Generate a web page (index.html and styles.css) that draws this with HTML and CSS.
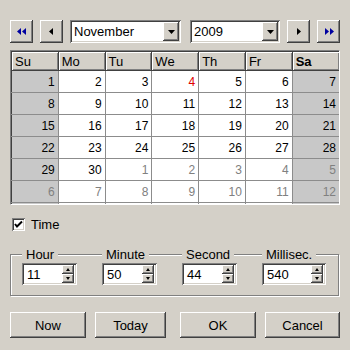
FILE: index.html
```html
<!DOCTYPE html>
<html lang="en">
<head>
    <meta charset="UTF-8">
    <title>Date Chooser</title>
    <link rel="stylesheet" href="styles.css">
</head>
<body>
    <div class="dialog">
        <div class="nav">
            <button class="nav-btn"><svg width="10" height="7" viewBox="0 0 10 7"><polygon points="0,3.5 4,0 4,7" fill="#0000a0"/><polygon points="5,3.5 9,0 9,7" fill="#0000a0"/></svg></button>
            <button class="nav-btn"><svg width="5" height="7" viewBox="0 0 5 7"><polygon points="0,3.5 4,0 4,7" fill="#000"/></svg></button>
            <div class="combo combo-month">
                <span class="combo-text">November</span>
                <span class="combo-arrow"><svg width="7" height="4" viewBox="0 0 7 4"><polygon points="0,0 7,0 3.5,4" fill="#000"/></svg></span>
            </div>
            <div class="combo combo-year">
                <span class="combo-text">2009</span>
                <span class="combo-arrow"><svg width="7" height="4" viewBox="0 0 7 4"><polygon points="0,0 7,0 3.5,4" fill="#000"/></svg></span>
            </div>
            <button class="nav-btn"><svg width="5" height="7" viewBox="0 0 5 7"><polygon points="5,3.5 1,0 1,7" fill="#000"/></svg></button>
            <button class="nav-btn"><svg width="10" height="7" viewBox="0 0 10 7"><polygon points="5,3.5 1,0 1,7" fill="#0000a0"/><polygon points="10,3.5 6,0 6,7" fill="#0000a0"/></svg></button>
        </div>

        <div class="calendar">
            <table class="days">
                <thead>
                    <tr>
                        <th>Su</th><th>Mo</th><th>Tu</th><th>We</th><th>Th</th><th>Fr</th><th class="sat">Sa</th>
                    </tr>
                </thead>
                <tbody>
                    <tr><td class="weekend">1</td><td>2</td><td>3</td><td class="today">4</td><td>5</td><td>6</td><td class="weekend">7</td></tr>
                    <tr><td class="weekend">8</td><td>9</td><td>10</td><td>11</td><td>12</td><td>13</td><td class="weekend">14</td></tr>
                    <tr><td class="weekend">15</td><td>16</td><td>17</td><td>18</td><td>19</td><td>20</td><td class="weekend">21</td></tr>
                    <tr><td class="weekend">22</td><td>23</td><td>24</td><td>25</td><td>26</td><td>27</td><td class="weekend">28</td></tr>
                    <tr><td class="weekend">29</td><td>30</td><td class="other">1</td><td class="other">2</td><td class="other">3</td><td class="other">4</td><td class="weekend other">5</td></tr>
                    <tr><td class="weekend other">6</td><td class="other">7</td><td class="other">8</td><td class="other">9</td><td class="other">10</td><td class="other">11</td><td class="weekend other">12</td></tr>
                    <tr class="cut"><td class="weekend"></td><td></td><td></td><td></td><td></td><td></td><td class="weekend"></td></tr>
                </tbody>
            </table>
        </div>

        <label class="option">
            <span class="checkbox"><svg width="9" height="9" viewBox="0 0 9 9"><polyline points="1,4 3,6.5 8,1.5" fill="none" stroke="#000" stroke-width="2"/></svg></span>
            <span>Time</span>
        </label>

        <div class="time-panel">
            <div class="spin-group">
                <span class="spin-label">Hour</span>
                <div class="spinner">
                    <span class="spin-value">11</span>
                    <span class="spin-buttons"><span class="spin-btn"><i class="up"></i></span><span class="spin-btn"><i class="down"></i></span></span>
                </div>
            </div>
            <div class="spin-group">
                <span class="spin-label">Minute</span>
                <div class="spinner">
                    <span class="spin-value">50</span>
                    <span class="spin-buttons"><span class="spin-btn"><i class="up"></i></span><span class="spin-btn"><i class="down"></i></span></span>
                </div>
            </div>
            <div class="spin-group">
                <span class="spin-label">Second</span>
                <div class="spinner">
                    <span class="spin-value">44</span>
                    <span class="spin-buttons"><span class="spin-btn"><i class="up"></i></span><span class="spin-btn"><i class="down"></i></span></span>
                </div>
            </div>
            <div class="spin-group spin-wide">
                <span class="spin-label">Millisec.</span>
                <div class="spinner">
                    <span class="spin-value">540</span>
                    <span class="spin-buttons"><span class="spin-btn"><i class="up"></i></span><span class="spin-btn"><i class="down"></i></span></span>
                </div>
            </div>
        </div>

        <div class="actions">
            <button class="btn btn-now">Now</button>
            <button class="btn btn-today">Today</button>
            <button class="btn btn-ok">OK</button>
            <button class="btn btn-cancel">Cancel</button>
        </div>
    </div>
</body>
</html>
```

FILE: styles.css
```css
body {
    margin: 0;
    padding: 0;
    background: #d4d0c8;
    font-family: "Liberation Sans", Arial, sans-serif;
    font-size: 13px;
    color: #000;
}

.dialog {
    width: 350px;
    height: 350px;
    box-sizing: border-box;
    padding: 20px 10px 0 10px;
}

/* raised / sunken look */
.nav-btn,
.combo-arrow,
.btn,
.spin-btn {
    background: #d4d0c8;
    border: none;
    box-shadow: inset -1px -1px #404040, inset 1px 1px #fff, inset -2px -2px #808080, inset 2px 2px #d4d0c8;
}

.combo,
.spinner,
.checkbox {
    background: #fff;
    box-shadow: inset 1px 1px #808080, inset -1px -1px #fff, inset 2px 2px #404040, inset -2px -2px #d4d0c8;
}

.nav {
    display: flex;
    height: 23px;
}

.nav-btn {
    width: 23px;
    height: 23px;
    padding: 0;
    margin-right: 7px;
    display: flex;
    align-items: center;
    justify-content: center;
}

.nav-btn:last-child {
    margin-right: 0;
}

.combo {
    display: flex;
    align-items: center;
    box-sizing: border-box;
    padding: 2px;
    height: 23px;
    margin-right: 7px;
}

.combo-month {
    width: 111px;
    margin-right: 9px;
}

.combo-year {
    width: 90px;
}

.combo-text {
    flex: 1;
    padding-left: 2px;
    font-size: 13px;
}

.combo-arrow {
    width: 16px;
    height: 19px;
    display: flex;
    align-items: center;
    justify-content: center;
}

.calendar {
    margin-top: 7px;
    width: 330px;
    height: 155px;
    box-sizing: border-box;
    border-top: 1px solid #808080;
    border-left: 1px solid #808080;
    border-right: 1px solid #fff;
    border-bottom: 1px solid #fff;
    background: #fff;
    overflow: hidden;
}

.days {
    width: 100%;
    border-collapse: collapse;
    table-layout: fixed;
    border-top: 1px solid #404040;
    border-left: 1px solid #404040;
}

.days th {
    height: 19px;
    padding: 0 0 0 3px;
    text-align: left;
    font-weight: normal;
    font-size: 13px;
    background: #d4d0c8;
    box-sizing: border-box;
    border-right: 1px solid #404040;
    border-bottom: 1px solid #404040;
    box-shadow: inset 1px 1px #fff, inset -1px -1px #808080;
}

.days th.sat {
    font-weight: bold;
}

.days td {
    height: 22px;
    padding: 0 3px 0 0;
    text-align: right;
    font-size: 12px;
    box-sizing: border-box;
    border-right: 1px solid #8c8c8c;
    border-bottom: 1px solid #8c8c8c;
}

.days tr > :last-child {
    border-right: none;
}

.days td.weekend {
    background: #c8c8c8;
}

.days td.today {
    color: #e00000;
}

.days td.other {
    color: #808080;
}

.option {
    margin-top: 13px;
    height: 13px;
    display: flex;
    align-items: center;
    padding-left: 2px;
}

.checkbox {
    width: 13px;
    height: 13px;
    margin-right: 6px;
    display: flex;
    align-items: center;
    justify-content: center;
}

.time-panel {
    margin-top: 23px;
    width: 329px;
    box-sizing: border-box;
    border: 1px solid #808080;
    box-shadow: inset 1px 1px #fff, 1px 1px #fff;
    padding: 0 0 10px 11px;
    display: flex;
}

.spin-group {
    width: 55px;
    margin-right: 25px;
    display: flex;
    flex-direction: column;
    align-items: flex-start;
}

.spin-group.spin-wide {
    width: 64px;
    margin-right: 0;
}

.spin-label {
    margin-top: -8px;
    height: 15px;
    line-height: 15px;
    padding: 0 4px;
    background: #d4d0c8;
}

.spinner {
    margin-top: 1px;
    width: 100%;
    height: 22px;
    box-sizing: border-box;
    padding: 2px 3px 2px 2px;
    display: flex;
    align-items: center;
}

.spin-value {
    flex: 1;
    padding-left: 3px;
}

.spin-buttons {
    display: flex;
    flex-direction: column;
}

.spin-btn {
    width: 12px;
    height: 9px;
    display: flex;
    align-items: center;
    justify-content: center;
}

.spin-btn i {
    width: 0;
    height: 0;
    border-left: 2.5px solid transparent;
    border-right: 2.5px solid transparent;
}

.spin-btn i.up {
    border-bottom: 3px solid #000;
}

.spin-btn i.down {
    border-top: 3px solid #000;
}

.actions {
    margin-top: 16px;
    display: flex;
}

.btn {
    height: 26px;
    padding: 0;
    font-family: "Liberation Sans", Arial, sans-serif;
    font-size: 13px;
    color: #000;
}

.btn-now {
    width: 76px;
    margin-right: 9px;
}

.btn-today {
    width: 71px;
    margin-right: 14px;
}

.btn-ok {
    width: 76px;
    margin-right: 9px;
}

.btn-cancel {
    width: 75px;
}
```
